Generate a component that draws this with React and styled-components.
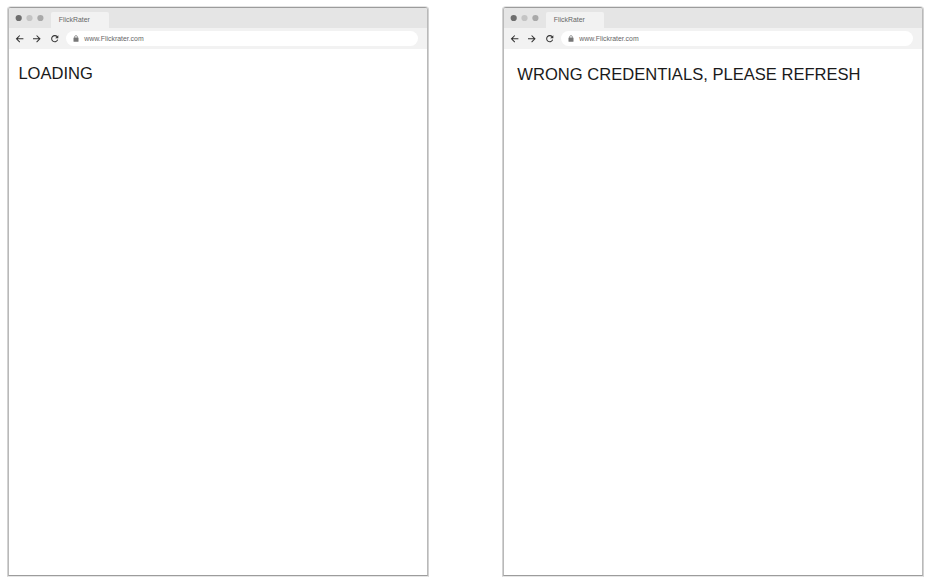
import React from "react";
import styled, { createGlobalStyle } from "styled-components";

const GlobalStyle = createGlobalStyle`
  * { box-sizing: border-box; }
  body {
    margin: 0;
    background: #fff;
    font-family: "Liberation Sans", Arial, sans-serif;
  }
`;

const Board = styled.main`
  display: flex;
  gap: 73px;
  padding: 6px 0 0 7px;
  height: 585px;
  overflow: hidden;
`;

const Frame = styled.section`
  flex: none;
  width: 422px;
  height: 571px;
  border: 1px solid #d2d2d2;
  border-top-color: #e4e4e4;
  border-bottom-color: #e6e6e6;
  border-radius: 4px 4px 0 0;
`;

const Inner = styled.div`
  display: flex;
  flex-direction: column;
  height: 100%;
  border: 1px solid #b9b9b9;
  border-top-color: #9c9c9c;
  border-bottom-color: #9c9c9c;
  border-radius: 3px 3px 0 0;
  overflow: hidden;
`;

const TabStrip = styled.div`
  display: flex;
  align-items: flex-end;
  flex: none;
  height: 20px;
  background: #e5e5e5;
`;

const Lights = styled.svg`
  flex: none;
  width: 42px;
  height: 20px;
`;

const Tab = styled.div`
  width: 58px;
  height: 16px;
  padding-left: 7.8px;
  border-radius: 2px 2px 0 0;
  background: #f2f2f2;
  color: #666;
  font-size: 6.9px;
  line-height: 16px;
`;

const Toolbar = styled.div`
  display: flex;
  align-items: center;
  flex: none;
  height: 21px;
  padding: 0 9px 0 6px;
  background: #f2f2f2;
`;

const NavIcon = styled.svg`
  flex: none;
  width: 9px;
  height: 9px;
  margin-right: ${(p) => p.$gap}px;
  fill: none;
  stroke: #333;
  stroke-width: 1.05;
`;

const Address = styled.div`
  display: flex;
  align-items: center;
  flex: 1;
  height: 15px;
  padding-left: 6.5px;
  border-radius: 8px;
  background: #fff;
  color: #666;
  font-size: 6.9px;
  line-height: 15px;
`;

const Lock = styled.svg`
  flex: none;
  width: 6px;
  height: 7px;
  margin-right: 5.5px;
`;

const Message = styled.p`
  margin: ${(p) => p.$top}px 0 0 ${(p) => p.$left}px;
  color: #1a1a1a;
  font-size: 16.57px;
  line-height: 20px;
  white-space: nowrap;
`;

function BrowserWindow({ message, top, left }) {
  return (
    <Frame>
      <Inner>
        <TabStrip>
          <Lights viewBox="0 0 42 20">
            <circle cx="9.7" cy="10" r="3.1" fill="#6e6e6e" />
            <circle cx="20.5" cy="10" r="3.1" fill="#c4c4c4" />
            <circle cx="31.4" cy="10" r="3.1" fill="#a9a9a9" />
          </Lights>
          <Tab>FlickRater</Tab>
        </TabStrip>
        <Toolbar>
          <NavIcon $gap={8} viewBox="0 0 9 9">
            <path d="M8.4 4.8H1.6M4.8 1.5L1.5 4.8L4.8 8.1" />
          </NavIcon>
          <NavIcon $gap={9} viewBox="0 0 9 9">
            <path d="M1 4.8H7.8M4.6 1.5L7.9 4.8L4.6 8.1" />
          </NavIcon>
          <NavIcon $gap={7.3} viewBox="0 0 9 9">
            <path d="M7.2 2.8A3.1 3.1 0 1 0 7.7 5.7" />
            <path d="M8.3 1.2V4.3H5.2Z" fill="#333" stroke="none" />
          </NavIcon>
          <Address>
            <Lock viewBox="0 0 6 7">
              <rect x="0.5" y="2.6" width="5" height="4.2" rx="0.5" fill="#777" />
              <path d="M1.6 2.8V2A1.4 1.4 0 0 1 4.4 2V2.8" fill="none" stroke="#777" strokeWidth="0.7" />
            </Lock>
            www.Flickrater.com
          </Address>
        </Toolbar>
        <Message $top={top} $left={left}>{message}</Message>
      </Inner>
    </Frame>
  );
}

export default function App() {
  return (
    <>
      <GlobalStyle />
      <Board>
        <BrowserWindow message="LOADING" top={15} left={9.4} />
        <BrowserWindow message="WRONG CREDENTIALS, PLEASE REFRESH" top={16} left={13.3} />
      </Board>
    </>
  );
}
